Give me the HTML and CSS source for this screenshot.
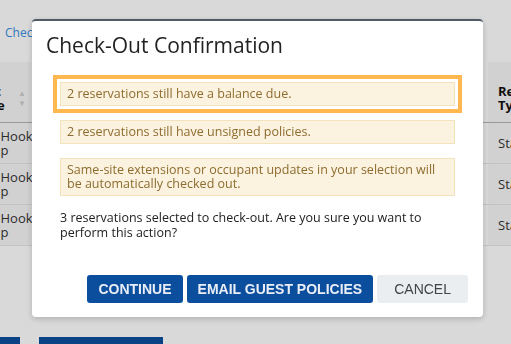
FILE: index.html
```html
<!DOCTYPE html>
<html lang="en">
<head>
  <meta charset="UTF-8">
  <meta name="viewport" content="width=device-width, initial-scale=1.0">
  <title>Check-Out Confirmation</title>
  <link rel="stylesheet" href="styles.css">
</head>
<body>

  <div class="page">
    <a class="page-link" href="#">Check-Out</a>

    <div class="grid-wrap">
      <table class="grid">
        <thead>
          <tr>
            <th class="col-site">
              <div class="th-sort">
                <span>Unit<br>Zone</span>
                <span class="sort">&#9650;<br>&#9660;</span>
              </div>
            </th>
            <th class="col-mid">Guest</th>
            <th class="col-type">Reservation<br>Type</th>
          </tr>
        </thead>
        <tbody>
          <tr>
            <td class="col-site">Fish Hook<br>Camp</td>
            <td class="col-mid">Smith, John</td>
            <td class="col-type">Standard</td>
          </tr>
          <tr>
            <td class="col-site">Fish Hook<br>Camp</td>
            <td class="col-mid">Lee, Anna</td>
            <td class="col-type">Standard</td>
          </tr>
          <tr>
            <td class="col-site">Fish Hook<br>Camp</td>
            <td class="col-mid">Brown, Mark</td>
            <td class="col-type">Standard</td>
          </tr>
        </tbody>
      </table>
    </div>

    <div class="page-actions">
      <button class="page-btn small">Back</button>
      <button class="page-btn">Check-Out Selected</button>
    </div>
  </div>

  <div class="overlay"></div>

  <div class="modal">
    <h2 class="modal-title">Check-Out Confirmation</h2>

    <div class="modal-body">
      <div class="alert focused">2 reservations still have a balance due.</div>
      <div class="alert">2 reservations still have unsigned policies.</div>
      <div class="alert">Same-site extensions or occupant updates in your selection will be automatically checked out.</div>
      <p class="question">3 reservations selected to check-out. Are you sure you want to perform this action?</p>
    </div>

    <div class="modal-footer">
      <button class="btn primary">CONTINUE</button>
      <button class="btn primary">EMAIL GUEST POLICIES</button>
      <button class="btn secondary">CANCEL</button>
    </div>
  </div>

</body>
</html>
```

FILE: styles.css
```css
body {
  margin: 0;
  font-family: "Open Sans", Arial, sans-serif;
  background-color: #fff;
  height: 344px;
  overflow: hidden;
}

.page {
  padding-top: 24px;
  height: 344px;
  overflow: hidden;
  box-sizing: border-box;
}

.page-link {
  display: block;
  color: #3a8ee0;
  text-decoration: none;
  font-size: 12px;
  padding-left: 5px;
  height: 38px;
}

.grid-wrap {
  overflow: hidden;
}

.grid {
  border-collapse: collapse;
  margin-left: -31px;
  width: 623px;
  table-layout: fixed;
  font-size: 13px;
  line-height: 14px;
  color: #333;
}

.grid th {
  text-align: left;
  height: 60px;
  padding-bottom: 10px;
  vertical-align: bottom;
  color: #111;
  border-bottom: 1px solid #b4b4b4;
  box-sizing: border-box;
}

.grid td {
  height: 41px;
  white-space: nowrap;
  border-bottom: 1px solid #e6e6e6;
  box-sizing: border-box;
}

.col-site {
  width: 62px;
  padding: 0 5px 0 4px;
  box-sizing: border-box;
  background-color: #f6f6f6;
}

.th-sort {
  display: flex;
  align-items: center;
  justify-content: space-between;
}

.sort {
  font-size: 8px;
  line-height: 10px;
  color: #cfcfcf;
}

.col-mid {
  width: 457px;
  padding-left: 14px;
}

.col-type {
  width: 104px;
  padding-left: 10px;
  background-color: #f6f6f6;
}

.page-actions {
  display: flex;
  gap: 19px;
  margin-top: 91px;
}

.page-btn {
  background-color: #0b4f9e;
  color: #fff;
  border: none;
  width: 124px;
  height: 24px;
  font-size: 12px;
}

.page-btn.small {
  width: 20px;
  overflow: hidden;
}

.overlay {
  position: fixed;
  inset: 0;
  background-color: rgba(0, 0, 0, 0.15);
}

.modal {
  position: fixed;
  left: 32px;
  top: 19px;
  width: 451px;
  height: 298px;
  background-color: #fff;
  border-top: 2px solid #505b66;
  border-radius: 4px;
  box-shadow: 0 2px 6px rgba(0, 0, 0, 0.2);
  box-sizing: border-box;
  display: flex;
  flex-direction: column;
}

.modal-title {
  margin: 0;
  padding: 10px 14px 0;
  font-size: 21px;
  line-height: 28px;
  font-weight: normal;
  color: #222;
}

.modal-body {
  padding: 23px 28px 0;
}

.alert {
  background-color: #fbf3df;
  border: 1px solid #f3e3bd;
  color: #8e6c2f;
  font-size: 12.5px;
  line-height: 14px;
  padding: 4px 6px;
  margin-bottom: 14px;
}

.alert.focused {
  outline: 4px solid #ffb84f;
  outline-offset: 3px;
}

.question {
  margin: 1px 0 0;
  font-size: 12.5px;
  line-height: 15px;
  color: #222;
}

.modal-footer {
  margin-top: auto;
  padding: 0 15px 14px;
  display: flex;
  justify-content: flex-end;
  gap: 4px;
}

.btn {
  border: none;
  border-radius: 3px;
  height: 28px;
  padding: 0 11px;
  font-family: "Liberation Sans", Arial, sans-serif;
  font-size: 14px;
  font-weight: bold;
  cursor: pointer;
}

.btn.primary {
  background-color: #0b4e9e;
  color: #e9eef6;
}

.btn.secondary {
  background-color: #eaeef1;
  color: #444;
  font-weight: normal;
  padding: 0 17px;
}
```
